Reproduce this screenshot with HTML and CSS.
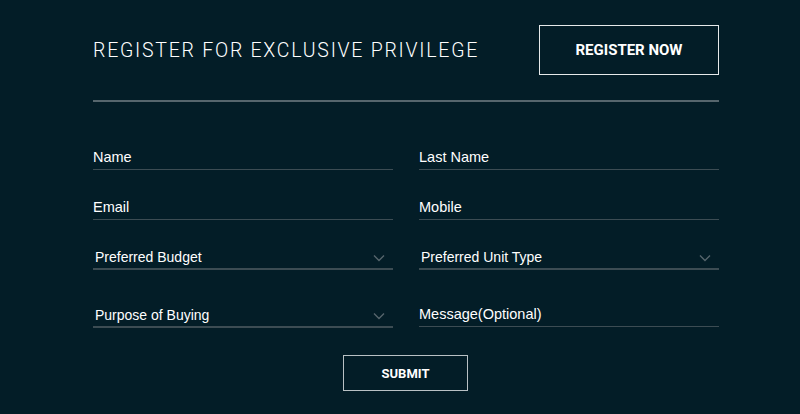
FILE: index.html
```html
<!DOCTYPE html>
<html lang="en">
<head>
  <meta charset="UTF-8">
  <title>Register - Exclusive Privilege</title>
  <meta name="viewport" content="width=device-width, initial-scale=1">
  <link rel="stylesheet" href="styles.css">
</head>
<body>
  <div class="register-box">
    <div class="register-head">
      <h2>Register for Exclusive Privilege</h2>
      <a class="btn-register" href="#">Register Now</a>
    </div>

    <form class="register-form" onsubmit="return false;">
      <div class="field"><input type="text" placeholder="Name"></div>
      <div class="field"><input type="text" placeholder="Last Name"></div>
      <div class="field"><input type="email" placeholder="Email"></div>
      <div class="field"><input type="tel" placeholder="Mobile"></div>
      <div class="field select">
        <span>Preferred Budget</span>
        <svg width="12" height="8" viewBox="0 0 12 8"><path d="M1 1.5l5 5 5-5" fill="none" stroke="#56656c" stroke-width="1.4"/></svg>
      </div>
      <div class="field select">
        <span>Preferred Unit Type</span>
        <svg width="12" height="8" viewBox="0 0 12 8"><path d="M1 1.5l5 5 5-5" fill="none" stroke="#56656c" stroke-width="1.4"/></svg>
      </div>
      <div class="field select low">
        <span>Purpose of Buying</span>
        <svg width="12" height="8" viewBox="0 0 12 8"><path d="M1 1.5l5 5 5-5" fill="none" stroke="#56656c" stroke-width="1.4"/></svg>
      </div>
      <div class="field low msg"><input type="text" placeholder="Message(Optional)"></div>

      <div class="submit-row">
        <button type="submit">Submit</button>
      </div>
    </form>
  </div>
</body>
</html>
```

FILE: styles.css
```css
body {
  margin: 0;
  background: #031d27;
  font-family: Arial, "Liberation Sans", sans-serif;
  color: #fff;
}

.register-box {
  width: 626px;
  padding: 25px 0 0 93px;
}

.register-head {
  display: flex;
  justify-content: space-between;
  align-items: center;
  padding-bottom: 25px;
  border-bottom: 2px solid #56666d;
}

.register-head h2 {
  margin: 0;
  font-family: Roboto, sans-serif;
  font-weight: 300;
  font-size: 19.5px;
  letter-spacing: 1.75px;
  text-transform: uppercase;
}

.btn-register {
  width: 178px;
  height: 48px;
  border: 1px solid #e6e9ea;
  display: flex;
  align-items: center;
  justify-content: center;
  color: #fff;
  text-decoration: none;
  font-family: Roboto, sans-serif;
  font-weight: 700;
  font-size: 15px;
  text-transform: uppercase;
}

.register-form {
  display: grid;
  grid-template-columns: 300px 300px;
  column-gap: 26px;
  padding-top: 47px;
}

.field {
  height: 20px;
  border-bottom: 1px solid #3c4c53;
  margin-bottom: 29px;
  display: flex;
  align-items: flex-start;
}

.field input {
  width: 100%;
  background: transparent;
  border: none;
  outline: none;
  padding: 0;
  color: #fff;
  font-family: Arial, "Liberation Sans", sans-serif;
  font-size: 14.5px;
}

.field input::placeholder {
  color: #fff;
  opacity: 1;
}

.field.select {
  height: 19px;
  justify-content: space-between;
  padding-left: 2px;
  font-size: 14px;
  border-bottom-width: 2px;
}

.field.select svg {
  margin: 5px 8px 0 0;
}

.field.low {
  margin-top: 8px;
  margin-bottom: 27px;
}

.field.msg {
  margin-top: 7px;
  height: 20px;
}

.submit-row {
  grid-column: 1 / 3;
  display: flex;
  justify-content: center;
  margin-right: 1px;
}

button {
  width: 125px;
  height: 36px;
  background: transparent;
  border: 1px solid #b9c1c4;
  color: #fff;
  font-family: Roboto, sans-serif;
  font-weight: 700;
  font-size: 13px;
  text-transform: uppercase;
  cursor: pointer;
}
```
